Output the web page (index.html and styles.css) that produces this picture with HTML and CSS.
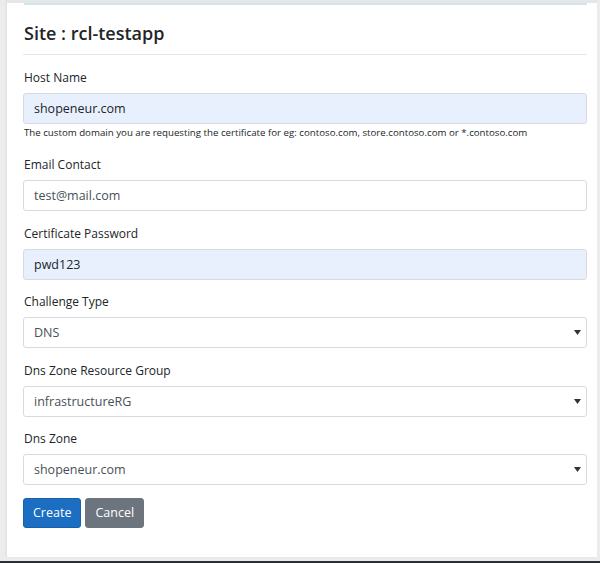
FILE: index.html
```html
<!DOCTYPE html>
<html>
<head>
<meta charset="utf-8">
<link rel="stylesheet" href="styles.css">
</head>
<body>
<div class="card">
  <div class="alert-stub"></div>
  <h4 class="title">Site : rcl-testapp</h4>
  <hr class="rule">
  <form class="form">
    <div class="group">
      <label class="label">Host Name</label>
      <input class="control autofill" type="text" value="shopeneur.com">
      <small class="help">The custom domain you are requesting the certificate for eg: contoso.com, store.contoso.com or *.contoso.com</small>
    </div>
    <div class="group">
      <label class="label">Email Contact</label>
      <input class="control" type="text" value="test@mail.com">
    </div>
    <div class="group">
      <label class="label">Certificate Password</label>
      <input class="control autofill" type="text" value="pwd123">
    </div>
    <div class="group">
      <label class="label">Challenge Type</label>
      <select class="control select"><option>DNS</option></select>
    </div>
    <div class="group">
      <label class="label">Dns Zone Resource Group</label>
      <select class="control select"><option>infrastructureRG</option></select>
    </div>
    <div class="group">
      <label class="label">Dns Zone</label>
      <select class="control select"><option>shopeneur.com</option></select>
    </div>
    <div class="actions">
      <button type="button" class="btn btn-primary">Create</button>
      <button type="button" class="btn btn-secondary">Cancel</button>
    </div>
  </form>
</div>
<div class="gap"></div>
<div class="taskbar"></div>
</body>
</html>
```

FILE: styles.css
```css
html, body {
  margin: 0;
  padding: 0;
}
body {
  background: #ececec;
  width: 600px;
  height: 563px;
  overflow: hidden;
  font-family: "Open Sans", "Noto Sans", sans-serif;
  color: #212529;
}
.card {
  margin-left: 7px;
  width: 590px;
  height: 557px;
  box-sizing: border-box;
  background: #fff;
  padding: 0 10px 0 16px;
  box-shadow: -1px 0 2px rgba(0,0,0,0.06);
  border-top: 3px solid #e6e6e6;
}
.alert-stub {
  height: 0;
  margin-left: 1px;
  border-bottom: 2px solid #cfe5ef;
}
.title {
  margin: 15px 0 0 1px;
  font-size: 18px;
  font-weight: 600;
  line-height: 26px;
}
.rule {
  margin: 8px 0 0 0;
  border: 0;
  border-top: 1px solid #e7e7e7;
}
.form {
  margin-top: 13px;
}
.group {
  margin-bottom: 12.5px;
}
.label {
  display: block;
  font-size: 12px;
  line-height: 19px;
  margin-bottom: 6px;
  padding-left: 1px;
}
.control {
  display: block;
  box-sizing: border-box;
  width: 100%;
  height: 31px;
  margin: 0;
  padding: 0 10px;
  font-family: inherit;
  font-size: 12.5px;
  color: #495057;
  background: #fff;
  border: 1px solid #d7dbe0;
  border-radius: 3px;
  outline: none;
}
.autofill {
  background: #e8f0fe;
  color: #212529;
}
.select {
  -webkit-appearance: none;
  appearance: none;
  background-image: url("data:image/svg+xml;utf8,<svg xmlns='http://www.w3.org/2000/svg' width='7' height='5'><path d='M0 0h7L3.5 5z' fill='%23333'/></svg>");
  background-repeat: no-repeat;
  background-position: right 5px center;
  color: #495057;
}
.help {
  display: block;
  margin-top: 2px;
  font-size: 9.7px;
  line-height: 14px;
  color: #212529;
  padding-left: 1px;
  margin-bottom: 15px;
}
.actions {
  display: flex;
  gap: 4px;
  margin-top: 0;
}
.btn {
  font-family: inherit;
  font-size: 12.5px;
  height: 30px;
  padding: 0 9px;
  border-radius: 3px;
  color: #fff;
  border: 1px solid transparent;
  line-height: 28px;
}
.btn-primary {
  background: #1b6ec2;
  border-color: #1861ac;
}
.btn-secondary {
  background: #6c757d;
  border-color: #6c757d;
}
.gap {
  height: 4px;
}
.taskbar {
  height: 2px;
  background: #2b2f33;
}
```
